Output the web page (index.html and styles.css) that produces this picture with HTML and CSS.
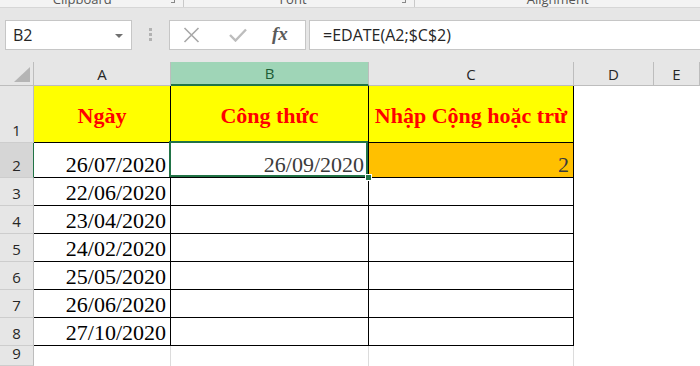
FILE: index.html
```html
<!DOCTYPE html>
<html lang="vi">
<head>
  <meta charset="UTF-8" />
  <meta name="viewport" content="width=device-width, initial-scale=1.0"/>
  <title>EDATE</title>
  <link rel="stylesheet" href="styles.css">
</head>
<body>
  <!-- ribbon group names, cut off at the top -->
  <div class="ribbon">
    <div class="group g1"><span class="label">Clipboard</span><span class="launch"></span></div>
    <div class="group g2"><span class="label">Font</span><span class="launch"></span></div>
    <div class="group g3"><span class="label">Alignment</span></div>
  </div>

  <!-- formula bar -->
  <div class="fbar">
    <div class="namebox">
      <span>B2</span>
      <span class="drop"></span>
    </div>
    <div class="grip"><i></i><i></i><i></i></div>
    <div class="fxbox">
      <svg class="ic-x" width="17" height="16" viewBox="0 0 17 16">
        <path d="M1.5 1 L15.5 15 M15.5 1 L1.5 15" stroke="#a8a8a8" stroke-width="1.6" fill="none"/>
      </svg>
      <svg class="ic-ok" width="18" height="14" viewBox="0 0 18 14">
        <path d="M1 7 L6.5 12.5 L17 1.5" stroke="#bdbdbd" stroke-width="2.4" fill="none"/>
      </svg>
      <span class="fx">fx</span>
    </div>
    <div class="formula">=EDATE(A2;$C$2)</div>
  </div>

  <!-- worksheet -->
  <div class="sheet">
    <div class="corner"><span class="tri"></span></div>
    <div class="ch">A</div>
    <div class="ch ch-sel">B</div>
    <div class="ch">C</div>
    <div class="ch">D</div>
    <div class="ch">E</div>

    <div class="rh">1</div>
    <div class="cell bx hdr">Ngày</div>
    <div class="cell bx hdr">Công thức</div>
    <div class="cell bx hdr">Nhập Cộng hoặc trừ</div>
    <div class="cell"></div>
    <div class="cell"></div>

    <div class="rh rh-sel">2</div>
    <div class="cell bx num">26/07/2020</div>
    <div class="cell bx num grey active">26/09/2020<span class="handle"></span></div>
    <div class="cell bx num grey orange">2</div>
    <div class="cell"></div>
    <div class="cell"></div>

    <div class="rh">3</div>
    <div class="cell bx num">22/06/2020</div>
    <div class="cell bx"></div>
    <div class="cell bx"></div>
    <div class="cell"></div>
    <div class="cell"></div>

    <div class="rh">4</div>
    <div class="cell bx num">23/04/2020</div>
    <div class="cell bx"></div>
    <div class="cell bx"></div>
    <div class="cell"></div>
    <div class="cell"></div>

    <div class="rh">5</div>
    <div class="cell bx num">24/02/2020</div>
    <div class="cell bx"></div>
    <div class="cell bx"></div>
    <div class="cell"></div>
    <div class="cell"></div>

    <div class="rh">6</div>
    <div class="cell bx num">25/05/2020</div>
    <div class="cell bx"></div>
    <div class="cell bx"></div>
    <div class="cell"></div>
    <div class="cell"></div>

    <div class="rh">7</div>
    <div class="cell bx num">26/06/2020</div>
    <div class="cell bx"></div>
    <div class="cell bx"></div>
    <div class="cell"></div>
    <div class="cell"></div>

    <div class="rh">8</div>
    <div class="cell bx num">27/10/2020</div>
    <div class="cell bx"></div>
    <div class="cell bx"></div>
    <div class="cell"></div>
    <div class="cell"></div>

    <div class="rh">9</div>
    <div class="cell gl"></div>
    <div class="cell gl"></div>
    <div class="cell gl"></div>
    <div class="cell"></div>
    <div class="cell"></div>
  </div>
</body>
</html>
```

FILE: styles.css
```css
* {
  box-sizing: border-box;
  margin: 0;
  padding: 0;
}

body {
  width: 700px;
  height: 366px;
  overflow: hidden;
  background: #e6e6e6;
  font-family: "Open Sans", "Noto Sans", sans-serif;
  color: #262626;
}

/* ribbon strip */
.ribbon {
  display: flex;
  height: 8px;
  overflow: hidden;
  background: #f3f3f3;
  border-bottom: 1px solid #d6d6d6;
}

.group {
  display: flex;
  border-right: 1px solid #c9c9c9;
  height: 7px;
}

.g1 { width: 187px; }
.g2 { width: 236px; }
.g3 { width: 290px; border-right: none; }

.label {
  flex: 1;
  text-align: center;
  font-size: 13px;
  line-height: 13px;
  margin-top: -7px;
  color: #555;
}

.g1 .label { padding-right: 6px; }

.launch {
  width: 4px;
  height: 3px;
  margin: 0 8px 0 0;
  border-right: 1px solid #888;
  border-bottom: 1px solid #888;
}

/* formula bar */
.fbar {
  display: flex;
  align-items: flex-start;
  height: 54px;
  padding: 12px 0 0 5px;
}

.namebox {
  width: 127px;
  height: 30px;
  background: #fff;
  border: 1px solid #c6c6c6;
  display: flex;
  align-items: center;
  padding: 0 8px 0 7px;
  font-size: 16px;
  color: #262626;
}

.namebox span:first-child {
  flex: 1;
}

.drop {
  width: 0;
  height: 0;
  border-left: 4px solid transparent;
  border-right: 4px solid transparent;
  border-top: 4px solid #707070;
  margin-top: 1px;
}

.grip {
  width: 37px;
  height: 30px;
  display: flex;
  flex-direction: column;
  align-items: center;
  gap: 2px;
  padding-top: 8px;
}

.grip i {
  display: block;
  width: 3px;
  height: 3px;
  background: #b2b2b2;
}

.fxbox {
  width: 137px;
  height: 30px;
  background: #fff;
  border: 1px solid #c6c6c6;
  display: flex;
  align-items: center;
  padding-left: 13px;
}

.ic-ok { margin-left: 29px; }

.fx {
  margin-left: 25px;
  font-family: "Liberation Serif", serif;
  font-style: italic;
  font-weight: bold;
  font-size: 19px;
  color: #5a5a5a;
  margin-top: -2px;
}

.formula {
  flex: 1;
  height: 30px;
  margin-left: 3px;
  margin-right: -1px;
  background: #fff;
  border: 1px solid #c6c6c6;
  display: flex;
  align-items: center;
  padding-left: 13px;
  font-size: 16px;
  color: #262626;
}

/* sheet grid */
.sheet {
  display: grid;
  grid-template-columns: 34px 137px 198px 205px 80px 46px;
  grid-template-rows: 24px 57px 35px repeat(6, 28px) 20px;
  background: #fff;
}

.corner {
  background: #e6e6e6;
  border-right: 1px solid #bdbdbd;
  border-bottom: 1px solid #bdbdbd;
  display: flex;
  align-items: flex-end;
  justify-content: flex-end;
  padding: 0 3px 3px 0;
}

.tri {
  width: 0;
  height: 0;
  border-left: 16px solid transparent;
  border-bottom: 15px solid #b5b5b5;
}

.ch {
  background: #e6e6e6;
  border-right: 1px solid #bdbdbd;
  border-bottom: 1px solid #bdbdbd;
  display: flex;
  align-items: center;
  justify-content: center;
  font-size: 15px;
  line-height: 15px;
  padding-top: 1px;
}

.ch-sel {
  background: #9fd5b7;
  color: #1d5c36;
  border-bottom: 2px solid #217346;
}

.rh {
  background: #e6e6e6;
  border-right: 1px solid #bdbdbd;
  border-bottom: 1px solid #cdcdcd;
  display: flex;
  align-items: flex-end;
  justify-content: center;
  font-size: 15px;
  line-height: 15px;
  padding-bottom: 4px;
}

.rh-sel {
  background: #d6d6d6;
  border-right-color: #217346;
}

.cell {
  position: relative;
  display: flex;
  align-items: flex-end;
  font-family: "Liberation Serif", "Times New Roman", serif;
  font-size: 22px;
  line-height: 22px;
  padding: 0 4px 1px 4px;
  color: #000;
  white-space: nowrap;
}

.bx {
  border-right: 1px solid #000;
  border-bottom: 1px solid #000;
}

.gl {
  border-right: 1px solid #dcdcdc;
}

.hdr {
  background: #ffff00;
  color: #ff0000;
  font-weight: bold;
  align-items: center;
  justify-content: center;
  padding: 4px 0 0 0;
}

.num {
  justify-content: flex-end;
}

.grey {
  color: #3b3b3b;
}

.orange {
  background: #ffc000;
}

/* selection outline on B2 */
.active::before {
  content: "";
  position: absolute;
  top: -2px;
  left: -2px;
  right: 0;
  bottom: 0;
  border: 2px solid #217346;
}

.handle {
  position: absolute;
  right: -4px;
  bottom: -4px;
  width: 7px;
  height: 7px;
  background: #217346;
  border: 1px solid #fff;
  z-index: 2;
}
```
